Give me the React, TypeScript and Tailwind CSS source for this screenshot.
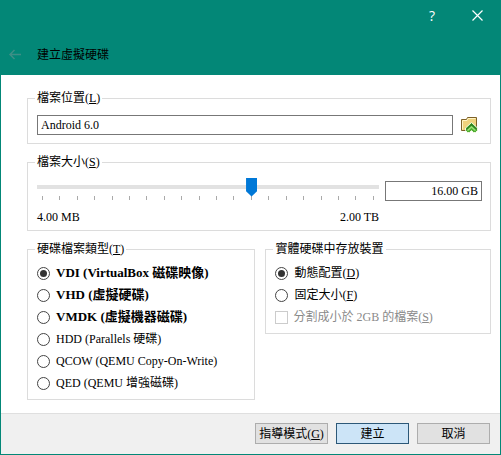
import { useState, type ReactNode } from "react";

const TICKS = Array.from({ length: 20 }, (_, i) => i);

const TYPES = [
  { id: "vdi", label: "VDI (VirtualBox 磁碟映像)", main: true },
  { id: "vhd", label: "VHD (虛擬硬碟)", main: true },
  { id: "vmdk", label: "VMDK (虛擬機器磁碟)", main: true },
  { id: "hdd", label: "HDD (Parallels 硬碟)", main: false },
  { id: "qcow", label: "QCOW (QEMU Copy-On-Write)", main: false },
  { id: "qed", label: "QED (QEMU 增強磁碟)", main: false },
];

function Key({ k }: { k: string }) {
  return (
    <>
      (<u className="underline-offset-1">{k}</u>)
    </>
  );
}

function Group({ title, className = "", children }: { title: ReactNode; className?: string; children: ReactNode }) {
  return (
    <fieldset className={`min-w-0 border border-[#dcdcdc] pr-2 pl-[9px] ${className}`}>
      <legend className="-ml-0.5 px-0.5 leading-[18px]">{title}</legend>
      {children}
    </fieldset>
  );
}

function Radio(props: { name: string; checked: boolean; onChange: () => void; bold?: boolean; children: ReactNode }) {
  return (
    <label className={`flex h-[22px] items-center gap-1.5 whitespace-nowrap ${props.bold ? "text-[13px] font-bold" : ""}`}>
      <input
        type="radio"
        name={props.name}
        checked={props.checked}
        onChange={props.onChange}
        className="m-0 grid size-[13px] shrink-0 appearance-none place-items-center rounded-full border border-[#444] bg-white before:size-[7px] before:rounded-full checked:before:bg-[#333]"
      />
      <span>{props.children}</span>
    </label>
  );
}

export default function App() {
  const [path, setPath] = useState("Android 6.0");
  const [size, setSize] = useState("16.00 GB");
  const [step, setStep] = useState(12);
  const [type, setType] = useState("vdi");
  const [storage, setStorage] = useState("dynamic");

  return (
    <div className="flex flex-col border-b border-[#038777] bg-white font-['Liberation_Serif','Noto_Sans_CJK_TC',serif] text-[12px] leading-4 text-black">
      <header className="h-[75px] bg-[#038777] pr-3.5 pl-2">
        <div className="flex h-[31px] items-center justify-end gap-[27px] text-white">
          <button type="button" aria-label="說明" className="w-4 text-center font-['Open_Sans',sans-serif] text-[14px]">
            ?
          </button>
          <button type="button" aria-label="關閉" className="flex w-5 justify-center">
            <svg width="11" height="11" viewBox="0 0 11 11" stroke="currentColor" strokeWidth="1.2">
              <path d="M.5.5l10 10M10.5.5l-10 10" />
            </svg>
          </button>
        </div>
        <div className="flex h-12 items-center gap-[15px]">
          <button type="button" aria-label="上一步" disabled className="text-[#3e8f86]">
            <svg width="14" height="12" viewBox="0 0 14 12" fill="none" stroke="currentColor" strokeWidth="1.5">
              <path d="M13 5.500H2M6.500 1L2 5.500l4.500 4.500" />
            </svg>
          </button>
          <h1>建立虛擬硬碟</h1>
        </div>
      </header>

      <div className="border-x border-[#038777]">
        <main className="flex flex-col gap-[9px] pt-3.5 pr-[9px] pb-[13px] pl-[26px]">
          <Group title={<>檔案位置<Key k="L" /></>} className="pb-2">
            <div className="flex items-center gap-2 pt-2">
              <input
                aria-label="檔案位置"
                value={path}
                onChange={(e) => setPath(e.target.value)}
                className="h-5 min-w-0 flex-1 border border-[#777] bg-white px-[3px]"
              />
              <button type="button" aria-label="選擇檔案位置" className="mr-1">
                <svg width="17" height="16" viewBox="0 0 17 16">
                  <path d="M.5 13.500v-11h5l1-2h9v13z" fill="#efd27c" stroke="#7d6128" />
                  <path d="M1.500 4v8.500M1.500 3.500h4.500l1-2h7.500" fill="none" stroke="#fff3c4" />
                  <path d="M10.500 5.500l6 5.500v2.500l-2 2h-2l-2-2-2 2h-2l-2-2V11z" fill="#4fae33" stroke="#f4f8e4" />
                  <path d="M5.500 12.500l5-5 5 5" fill="none" stroke="#2f7f20" strokeWidth="1.500" />
                  <path d="M6.500 13.500l4-3.500 4 3.500" fill="none" stroke="#9be276" strokeWidth="1.500" />
                </svg>
              </button>
            </div>
          </Group>

          <Group title={<>檔案大小<Key k="S" /></>} className="pb-[5px]">
            <div className="flex items-start gap-1.5 pt-1.5">
              <div className="min-w-0 flex-1">
                <input
                  type="range"
                  aria-label="檔案大小"
                  min={0}
                  max={19}
                  value={step}
                  onChange={(e) => setStep(Number(e.target.value))}
                  className="block h-[19px] w-full appearance-none bg-transparent [&::-webkit-slider-runnable-track]:h-1 [&::-webkit-slider-runnable-track]:bg-[#e2e2e2] [&::-webkit-slider-thumb]:-mt-[7px] [&::-webkit-slider-thumb]:h-[19px] [&::-webkit-slider-thumb]:w-[11px] [&::-webkit-slider-thumb]:appearance-none [&::-webkit-slider-thumb]:bg-[#0078d7] [&::-webkit-slider-thumb]:[clip-path:polygon(0_0,100%_0,100%_72%,50%_100%,0_72%)]"
                />
                <div className="flex justify-between px-[5px]">
                  {TICKS.map((t) => (
                    <span key={t} className="h-1 w-px bg-[#aaa]" />
                  ))}
                </div>
                <div className="flex justify-between pt-[9px]">
                  <span>4.00 MB</span>
                  <span>2.00 TB</span>
                </div>
              </div>
              <input
                aria-label="大小"
                value={size}
                onChange={(e) => setSize(e.target.value)}
                className="mt-1 h-5 w-[97px] border border-[#777] bg-white px-[3px] text-right"
              />
            </div>
          </Group>

          <div className="grid grid-cols-[229fr_226fr] items-start gap-2.5">
            <Group title={<>硬碟檔案類型<Key k="T" /></>} className="pb-[5px]">
              <div className="pt-1">
                {TYPES.map((t) => (
                  <Radio key={t.id} name="type" bold={t.main} checked={type === t.id} onChange={() => setType(t.id)}>
                    {t.label}
                  </Radio>
                ))}
              </div>
            </Group>
            <Group title="實體硬碟中存放裝置" className="pb-[5px]">
              <div className="pt-1">
                <Radio name="storage" checked={storage === "dynamic"} onChange={() => setStorage("dynamic")}>
                  動態配置<Key k="D" />
                </Radio>
                <Radio name="storage" checked={storage === "fixed"} onChange={() => setStorage("fixed")}>
                  固定大小<Key k="F" />
                </Radio>
                <label className="flex h-[22px] items-center gap-[5px] whitespace-nowrap text-[#8a8a8a]">
                  <input type="checkbox" disabled className="m-0 size-[13px] shrink-0 appearance-none border border-[#ccc] bg-white" />
                  <span>分割成小於 2GB 的檔案<Key k="S" /></span>
                </label>
              </div>
            </Group>
          </div>
        </main>

        <footer className="flex justify-end gap-2 border-t border-[#dfdfdf] bg-[#f0f0f0] px-2.5 pt-[9px] pb-2.5">
          <button type="button" className="h-[21px] w-[73px] border border-[#adadad] bg-[#e1e1e1] whitespace-nowrap">
            指導模式<Key k="G" />
          </button>
          <button type="button" className="h-[21px] w-[73px] border border-[#2c5878] bg-[#cce4f7]">
            建立
          </button>
          <button type="button" className="h-[21px] w-[73px] border border-[#adadad] bg-[#e1e1e1]">
            取消
          </button>
        </footer>
      </div>
    </div>
  );
}
